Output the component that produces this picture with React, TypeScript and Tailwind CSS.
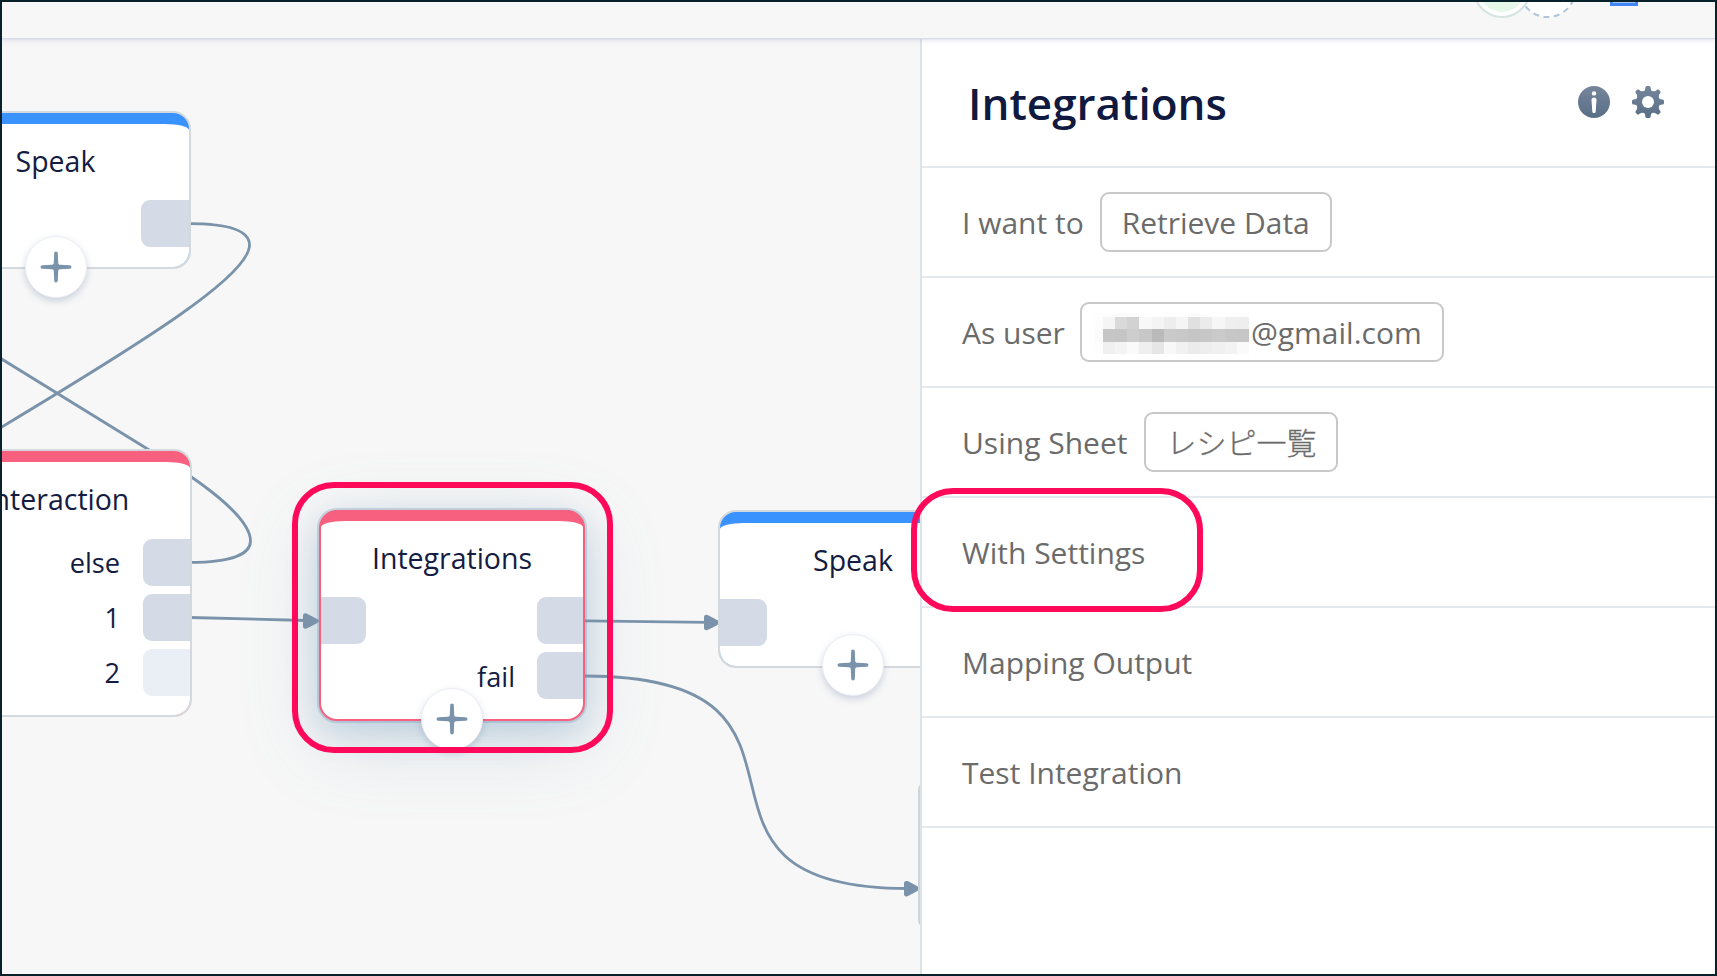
import { useId } from "react";
import type { ReactNode } from "react";

const LINE = "#7a93aa";

function PlusButton({ className }: { className: string }) {
  return (
    <div
      className={`absolute flex size-[62px] items-center justify-center rounded-full border border-[#eceef3] bg-white shadow-[0_3px_7px_rgba(90,110,150,0.28)] ${className}`}
    >
      <svg width="32" height="32" viewBox="0 0 32 32" fill={LINE}>
        <path d="M16 .6c1.1 0 1.8.7 1.8 1.8l.4 9.600c.1 1.100.8 1.700 1.800 1.800l9.600.4c1.100 0 1.800.7 1.800 1.800s-.7 1.800-1.800 1.800l-9.600.4c-1.100.1-1.700.8-1.800 1.800l-.4 9.600c0 1.100-.7 1.800-1.800 1.800s-1.800-.7-1.800-1.800l-.4-9.600c-.1-1.100-.8-1.700-1.800-1.800l-9.600-.4c-1.100 0-1.800-.7-1.800-1.800s.7-1.800 1.800-1.800l9.600-.4c1.100-.1 1.700-.8 1.800-1.800l.4-9.600c0-1.100.7-1.800 1.800-1.800z" />
      </svg>
    </div>
  );
}

type NodeProps = {
  title: string;
  place: string;
  bar: string;
  selected?: boolean;
  children?: ReactNode;
};

function FlowNode({ title, place, bar, selected, children }: NodeProps) {
  return (
    <div
      className={`absolute overflow-hidden rounded-[18px] border-2 ${bar} ${
        selected
          ? "border-[#f7607f] shadow-[0_0_0_2px_rgba(130,155,180,0.35),0_10px_32px_rgba(110,155,190,0.3),0_20px_76px_rgba(110,150,185,0.25)]"
          : "border-[#d4d9dd]"
      } ${place}`}
    >
      <div className={`relative h-full rounded-t-[24px_6px] bg-white ${selected ? "mt-[9px]" : "mt-[11px]"}`}>
        <h2 className="pt-[17px] text-center text-[28.500px] leading-[40px] text-[#141c42]">{title}</h2>
        {children}
      </div>
    </div>
  );
}

function Port({ className, muted }: { className: string; muted?: boolean }) {
  return <div className={`absolute h-[47px] ${muted ? "bg-[#e9eff4]" : "bg-[#d4dbe7]"} ${className}`} />;
}

function PortLabel({ className, children }: { className: string; children: ReactNode }) {
  return <span className={`absolute text-[27.200px] leading-[40px] text-[#141c42] ${className}`}>{children}</span>;
}

function Arrow({ x, y }: { x: number; y: number }) {
  return (
    <path
      d={`M${x - 16} ${y - 5}q0-3.500 3.500-2.600q5.500 2.600 11.500 6.200q2 1.400 0 2.800q-6 3.600-11.500 6.200q-3.500 .9-3.500-2.600z`}
      fill={LINE}
    />
  );
}

function Canvas() {
  return (
    <main className="relative w-[918px] shrink-0 overflow-hidden bg-[#f7f7f7]">
      <FlowNode
        title="Integrations"
        selected
        bar="bg-[#f7607f]"
        place="left-[317px] top-[472px] h-[211px] w-[266px]"
      />
      <svg className="absolute left-0 top-0" width="918" height="936" viewBox="2 38 918 936" fill="none">
        <g stroke={LINE} strokeWidth="2.8">
          <path d="M189 223.600C232 223.600 249.500 232 249.500 245C249.500 275 150 338 0 428" />
          <path d="M190 562.400C232 562.400 250.500 554 250.500 541C250.500 516 196 478 150 450.500L0 358" />
          <path d="M190 617.500L306 620.500" />
          <path d="M585 620.800L708 622.300" />
          <path d="M585 676C863 676 642 888.500 908 888.500" />
        </g>
        <Arrow x={319} y={621} />
        <Arrow x={720} y={622.500} />
        <Arrow x={920} y={888.700} />
      </svg>

      <FlowNode title="Speak" bar="bg-[#3a92ff]" place="-left-[82px] top-[73px] h-[158px] w-[271px]">
        <Port className="right-0 top-[76px] w-[48px] rounded-l-[9px]" />
      </FlowNode>
      <PlusButton className="left-[23px] top-[198px]" />

      <FlowNode title="Interaction" bar="bg-[#f7607f]" place="-left-[80px] top-[411px] h-[268px] w-[270px]">
        <Port className="right-0 top-[77px] w-[47px] rounded-l-[9px]" />
        <Port className="right-0 top-[132px] w-[47px] rounded-l-[9px]" />
        <Port muted className="right-0 top-[187px] w-[47px] rounded-l-[9px]" />
        <PortLabel className="right-[70px] top-[81px]">else</PortLabel>
        <PortLabel className="right-[70px] top-[136px]">1</PortLabel>
        <PortLabel className="right-[70px] top-[191px]">2</PortLabel>
      </FlowNode>

      <div className="absolute left-[317px] top-[470px] h-[212px] w-[266px]">
        <Port className="left-[2px] top-[89px] w-[45px] rounded-r-[9px]" />
        <Port className="right-[2px] top-[89px] w-[46px] rounded-l-[9px]" />
        <Port className="right-[2px] top-[144px] w-[46px] rounded-l-[9px]" />
        <PortLabel className="right-[70px] top-[149px]">fail</PortLabel>
      </div>
      <PlusButton className="left-[419px] top-[650px]" />

      <FlowNode title="Speak" bar="bg-[#3a92ff]" place="left-[716px] top-[472px] h-[158px] w-[270px]">
        <Port className="left-0 top-[76px] w-[47px] rounded-r-[9px]" />
      </FlowNode>
      <PlusButton className="left-[820px] top-[596px]" />
      <div className="absolute left-[916px] top-[744px] h-[146px] w-[10px] rounded-l-[8px] border-2 border-[#cdd5db]" />
    </main>
  );
}

function InfoIcon() {
  const id = useId();
  return (
    <svg width="32" height="32" viewBox="0 0 32 32">
      <linearGradient id={id} x1="0" y1="0" x2="0" y2="1">
        <stop offset="0" stopColor="#76859c" />
        <stop offset="1" stopColor="#596f86" />
      </linearGradient>
      <circle cx="16" cy="16" r="16" fill={`url(#${id})`} />
      <circle cx="16" cy="7.400" r="2.200" fill="#fff" />
      <path d="M16 11.600c1.700 0 2.600 1 2.500 2.500l-.8 11.500c-.1 1-.8 1.500-1.700 1.500s-1.600-.5-1.700-1.500l-.8-11.500c-.1-1.500.8-2.500 2.500-2.500z" fill="#fff" />
    </svg>
  );
}

function GearIcon() {
  const id = useId();
  return (
    <svg width="32" height="32" viewBox="0 0 32 32">
      <linearGradient id={id} gradientUnits="userSpaceOnUse" x1="0" y1="0" x2="0" y2="32">
        <stop offset="0" stopColor="#76859c" />
        <stop offset="1" stopColor="#596f86" />
      </linearGradient>
      <path
        fill={`url(#${id})`}
        d="M12.200 5Q13.400 3.500 13.400 1.500Q13.400 0 15 0H17Q18.600 0 18.600 1.500Q18.600 3.500 19.800 5L22 5.200Q23.600 5 24.800 3.900Q26 2.800 27.100 3.900L28.100 4.900Q29.200 6 28.100 7.200Q27 8.400 26.800 10L27 12.200Q28.500 13.400 30.500 13.400Q32 13.400 32 15V17Q32 18.600 30.500 18.600Q28.500 18.600 27 19.800L26.800 22Q27 23.600 28.100 24.800Q29.200 26 28.100 27.100L27.100 28.100Q26 29.200 24.800 28.100Q23.600 27 22 26.800L19.800 27Q18.600 28.500 18.600 30.500Q18.600 32 17 32H15Q13.400 32 13.400 30.500Q13.400 28.500 12.200 27L10 26.800Q8.400 27 7.200 28.100Q6 29.200 4.900 28.100L3.900 27.100Q2.800 26 3.900 24.800Q5 23.600 5.200 22L5 19.800Q3.500 18.600 1.500 18.600Q0 18.600 0 17V15Q0 13.400 1.500 13.400Q3.500 13.400 5 12.200L5.200 10Q5 8.400 3.900 7.200Q2.800 6 3.900 4.900L4.900 3.900Q6 2.800 7.200 3.900Q8.400 5 10 5.200Z"
      />
      <circle cx="16" cy="16" r="6" fill="#fff" />
    </svg>
  );
}

const MOSAIC_ROWS: { height: string; cells: string[] }[] = [
  { height: "h-[4px]", cells: ["#fdfdfd", "#fdfdfd", "#fbfbfb", "#fbfbfb", "#fefefe", "#fefefe", "#fdfdfd", "#fefefe", "#fbfbfb", "#fdfdfd", "#fefefe", "#fdfdfd", "#fdfdfd"] },
  { height: "h-[12px]", cells: ["#fdfdfd", "#f5f5f5", "#dadada", "#d2d2d2", "#f8f8f8", "#f4f4f4", "#ededed", "#f5f5f5", "#e0e0e0", "#ebebeb", "#f6f6f6", "#efefef", "#eeeeee"] },
  { height: "h-[13px]", cells: ["#fbfbfb", "#c6c6c6", "#c5c5c5", "#cdcdcd", "#c7c7c7", "#bababa", "#cacaca", "#c8c8c8", "#c5c5c5", "#c7c7c7", "#cacaca", "#c7c7c7", "#c6c6c6"] },
  { height: "h-[12px]", cells: ["#fdfdfd", "#f0f0f0", "#f4f4f4", "#fafafa", "#efefef", "#e6e6e6", "#f8f8f8", "#f1f1f1", "#ebebeb", "#eeeeee", "#f0f0f0", "#f3f3f3", "#fafafa"] },
];

function Mosaic() {
  return (
    <div className="mt-[3px] flex w-[154px] shrink-0 flex-col">
      {MOSAIC_ROWS.map((row, r) => (
        <div key={r} className={`grid grid-cols-[8px_repeat(12,minmax(0,1fr))] ${row.height}`}>
          {row.cells.map((color, c) => (
            <div key={c} style={{ backgroundColor: color }} />
          ))}
        </div>
      ))}
    </div>
  );
}

function Row({ label, children }: { label: string; children?: ReactNode }) {
  return (
    <div className="flex h-[110px] items-center border-b-2 border-[#e4e9ee] pl-[40px] text-[30px] text-[#6b6b6b]">
      <span className="whitespace-nowrap">{label}</span>
      {children}
    </div>
  );
}

function Pill({ className, children }: { className: string; children: ReactNode }) {
  return (
    <div
      className={`flex h-[60px] shrink-0 items-center whitespace-nowrap rounded-[9px] border-2 border-[#c8c8c8] ${className}`}
    >
      {children}
    </div>
  );
}

function SettingsPanel() {
  return (
    <aside className="flex min-w-0 flex-1 flex-col border-l-2 border-[#dbe4e8] bg-white">
      <header className="flex h-[130px] items-center justify-between border-b-2 border-[#e4e9ee] pl-[46px] pr-[51px]">
        <h1 className="pt-[2px] text-[44px] font-semibold leading-[60px] text-[#101940]">Integrations</h1>
        <div className="flex gap-[22px]">
          <InfoIcon />
          <GearIcon />
        </div>
      </header>
      <Row label="I want to">
        <Pill className="ml-[16px] w-[232px] justify-center">Retrieve Data</Pill>
      </Row>
      <Row label="As user">
        <Pill className="ml-[15px] w-[364px] pl-[13px]">
          <Mosaic />
          <span className="ml-[2px]">@gmail.com</span>
        </Pill>
      </Row>
      <Row label="Using Sheet">
        <Pill className="ml-[17px] w-[194px] justify-center font-light [-webkit-text-stroke:0.3px_#6b6b6b]">
          レシピ一覧
        </Pill>
      </Row>
      <Row label="With Settings" />
      <Row label="Mapping Output" />
      <Row label="Test Integration" />
    </aside>
  );
}

function TopBar() {
  return (
    <div className="relative z-10 h-[36px] shrink-0 bg-[#f7f7f7] shadow-[0_1px_1px_#d9dce8,0_2px_5px_rgba(120,130,170,0.25)]">
      <svg className="absolute right-0 top-0" width="260" height="36" viewBox="1455 2 260 36" fill="none">
        <circle cx="1547.500" cy="-11" r="28" fill="#fff" stroke="#afc5da" strokeWidth="2" strokeDasharray="6 4.500" />
        <circle cx="1502" cy="-11" r="28" fill="#fff" stroke="#d3e5df" strokeWidth="2" />
        <circle cx="1502" cy="-11" r="23" fill="#e6f8ea" />
        <path d="M1610 2h28v4h-28z" fill="#4285f4" />
        <path d="M1613 2h22v1h-22z" fill="#a9c7fb" />
      </svg>
    </div>
  );
}

export default function App() {
  return (
    <div className="relative flex h-[976px] w-[1717px] flex-col overflow-hidden border-2 border-[#08222c] bg-[#f7f7f7] font-['Open_Sans','Noto_Sans_CJK_JP',sans-serif]">
      <TopBar />
      <div className="flex min-h-0 flex-1">
        <Canvas />
        <SettingsPanel />
      </div>
      <div className="absolute left-[290px] top-[480px] h-[271px] w-[321px] rounded-[42px] border-[6px] border-[#ff0a5b]" />
      <div className="absolute left-[909px] top-[486px] h-[124px] w-[292px] rounded-[42px] border-[6px] border-[#ff0a5b]" />
    </div>
  );
}
